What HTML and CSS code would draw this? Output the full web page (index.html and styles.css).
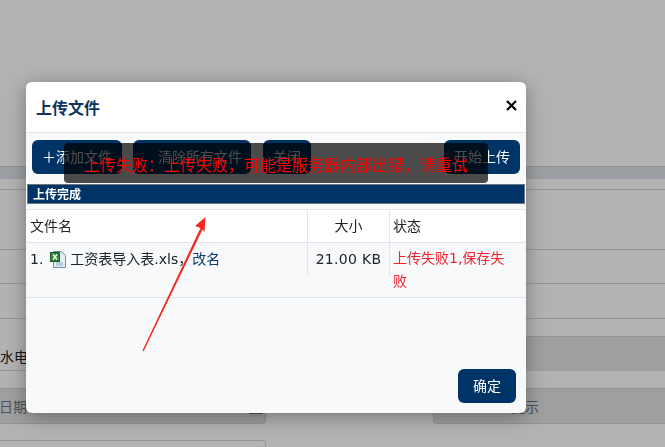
FILE: index.html
```html
<!DOCTYPE html>
<html lang="zh-CN">
<head>
    <meta charset="UTF-8">
    <title>上传文件</title>
    <link rel="stylesheet" href="styles.css">
</head>
<body>
<div class="page">
    <div class="page-band"></div>
    <div class="page-row row-a"></div>
    <div class="page-row row-b"></div>
    <div class="page-row row-c"></div>
    <div class="page-row row-d"></div>
    <div class="page-row row-e"><span class="page-label">水电</span><div class="page-fill"></div></div>
    <div class="page-fields">
        <div class="page-input input-left"><span>日期</span><i class="input-mark"></i></div>
        <div class="page-input input-right"><span>提示</span></div>
    </div>
    <div class="page-input input-next"></div>
</div>
<div class="overlay"></div>

<div class="modal">
    <div class="modal-header">
        <h3>上传文件</h3>
        <svg class="close" width="11" height="11" viewBox="0 0 11 11"><path d="M1 1 L10 10 M10 1 L1 10" stroke="#000" stroke-width="2.2" fill="none"/></svg>
    </div>
    <div class="toolbar">
        <a class="btn btn-add"><b class="plus">＋</b>添加文件</a>
        <a class="btn btn-clear">清除所有文件</a>
        <a class="btn btn-close">关闭</a>
        <a class="btn btn-start">开始上传</a>
    </div>
    <div class="progress">上传完成</div>
    <div class="file-head">
        <div class="col-name">文件名</div>
        <div class="col-size">大小</div>
        <div class="col-status">状态</div>
    </div>
    <div class="file-row">
        <div class="col-name">
            <span>1.</span>
            <svg class="xls" width="16" height="17" viewBox="0 0 16 17">
                <path d="M3.5 .5 H11.5 L15.5 4.500 V16.500 H3.500 Z" fill="#e4edf7" stroke="#6f8fb5"/>
                <path d="M6 12 H13 M6 14 H13" stroke="#8fa9c9"/>
                <rect x=".5" y="1.500" width="9" height="9" fill="#2f8a35" stroke="#1f5c24"/>
                <path d="M3 3.500 L7 8.500 M7 3.500 L3 8.500" stroke="#fff" stroke-width="1.300"/>
            </svg>
            <span class="file-name">工资表导入表.xls，</span><a class="rename">改名</a>
        </div>
        <div class="col-size size-value">21.00 KB</div>
        <div class="col-status error">上传失败1,保存失败</div>
    </div>
    <div class="modal-body"></div>
    <div class="modal-footer"><a class="btn btn-ok">确定</a></div>
</div>

<div class="toast">上传失败：上传失败，可能是服务器内部出错，请重试</div>

<svg class="arrow" width="665" height="447" viewBox="0 0 665 447">
    <path d="M142.500 350.500 L200.500 228 L195 226 L205.500 217 L204.500 232 L202.500 229.500 L143.500 351.500 Z" fill="#f5281e"/>
</svg>
</body>
</html>
```

FILE: styles.css
```css
html, body {
    height: 100%;
}
body {
    font-family: "DejaVu Sans", "Noto Sans CJK SC", sans-serif;
    font-size: 14px;
    color: #212529;
    margin: 0;
    overflow: hidden;
    background-color: #fff;
}
.page {
    height: 447px;
    padding-top: 166px;
    box-sizing: border-box;
    overflow: hidden;
}
.page-band {
    height: 13px;
    background-color: #dfe4ea;
    border-top: 1px solid #ced4da;
    box-sizing: border-box;
}
.page-row {
    border-bottom: 1px solid #d5d5d5;
    box-sizing: border-box;
}
.row-a { height: 11px; }
.row-b { height: 60px; }
.row-c { height: 34px; }
.row-d { height: 35px; }
.row-e {
    display: flex;
    justify-content: space-between;
    height: 52px;
}
.page-label {
    margin-top: 26px;
    height: 24px;
    line-height: 24px;
}
.page-fill {
    width: 325px;
    height: 35px;
    margin-top: 17px;
    background-color: #e4e4e4;
    border-top: 1px solid #ced4da;
    box-sizing: border-box;
}
.page-fields {
    display: flex;
    justify-content: space-between;
    margin-top: 17px;
}
.page-input {
    height: 36px;
    background-color: #e4e4e4;
    border: 1px solid #ced4da;
    border-radius: 4px;
    box-sizing: border-box;
    color: #6c757d;
    line-height: 36px;
    font-size: 14px;
}
.input-left {
    width: 276px;
    margin-left: -10px;
    position: relative;
    padding-left: 0;
}
.input-left span {
    display: block;
    width: 36px;
    text-align: right;
}
.input-mark {
    position: absolute;
    right: 2px;
    bottom: 9px;
    width: 14px;
    height: 1px;
    background-color: #777;
}
.input-right {
    width: 242px;
    margin-right: -10px;
    padding-left: 77px;
}
.input-next {
    width: 276px;
    margin: 16px 0 0 -10px;
    background-color: #fff;
}
.overlay {
    position: fixed;
    top: 0;
    left: 0;
    width: 100%;
    height: 100%;
    background-color: rgba(0, 0, 0, 0.3);
}
.modal {
    position: fixed;
    top: 82px;
    left: 26px;
    width: 500px;
    height: 331px;
    background-color: #f8f9fb;
    border-radius: 6px;
    box-shadow: 0 4px 20px rgba(0, 0, 0, 0.35);
    display: flex;
    flex-direction: column;
    overflow: hidden;
}
.modal-header {
    height: 51px;
    flex-shrink: 0;
    box-sizing: border-box;
    display: flex;
    justify-content: space-between;
    align-items: center;
    padding: 0 9px 0 11px;
    background-color: #fff;
    border-bottom: 1px solid #e0e5ec;
}
.modal-header h3 {
    margin: 0 0 0 -1px;
    font-size: 16px;
    font-weight: bold;
    color: #0b3560;
}
.close {
    margin-top: -3px;
}
.toolbar {
    height: 51px;
    flex-shrink: 0;
    box-sizing: border-box;
    display: flex;
    padding: 7px 6px 0 6px;
}
.btn {
    display: block;
    height: 34px;
    line-height: 35px;
    box-sizing: border-box;
    background-color: #003366;
    color: #fff;
    border-radius: 6px;
    text-align: center;
    white-space: nowrap;
}
.btn-add {
    width: 90px;
    margin-right: 11px;
}
.plus {
    font-weight: normal;
}
.btn-clear {
    width: 118px;
    margin-right: 12px;
    padding-left: 16px;
}
.btn-close {
    width: 48px;
}
.btn-start {
    width: 76px;
    margin-left: auto;
}
.progress {
    height: 20px;
    flex-shrink: 0;
    margin: 0 1px;
    box-sizing: border-box;
    padding-left: 5px;
    background-color: #003366;
    border: 1px solid #6c757d;
    color: #fff;
    font-size: 12px;
    font-weight: bold;
    line-height: 21px;
}
.file-head {
    display: flex;
    height: 34px;
    flex-shrink: 0;
    margin-top: 5px;
    box-sizing: border-box;
    background-color: #fff;
    border-top: 1px solid #e0e5ec;
    border-bottom: 1px solid #e0e5ec;
    line-height: 32px;
}
.col-name {
    width: 282px;
    padding-left: 4px;
    box-sizing: border-box;
    border-right: 1px solid #e0e5ec;
}
.col-size {
    width: 82px;
    box-sizing: border-box;
    text-align: center;
    border-right: 1px solid #e0e5ec;
}
.size-value {
    letter-spacing: 0.3px;
}
.col-status {
    flex: 1;
    padding: 0 17px 0 3px;
}
.file-row {
    display: flex;
    align-items: flex-start;
    height: 55px;
    flex-shrink: 0;
    box-sizing: border-box;
    border-bottom: 1px solid #e0e5ec;
}
.file-row .col-name,
.file-row .col-size {
    height: 32px;
    line-height: 32px;
}
.file-row .col-name {
    display: flex;
    align-items: center;
}
.xls {
    margin: 0 4px 0 7px;
}
.rename {
    color: #0b3d6e;
}
.error {
    color: #f5222d;
    line-height: 23px;
    padding-top: 4px;
}
.modal-body {
    flex: 1;
}
.modal-footer {
    display: flex;
    justify-content: flex-end;
    padding: 0 10px 10px 0;
}
.btn-ok {
    width: 58px;
}
.toast {
    position: fixed;
    top: 143px;
    left: 64px;
    width: 424px;
    height: 40px;
    line-height: 46px;
    background-color: rgba(0, 0, 0, 0.7);
    border-radius: 4px;
    color: #f00;
    font-size: 16px;
    text-align: center;
}
.arrow {
    position: fixed;
    top: 0;
    left: 0;
}
```
